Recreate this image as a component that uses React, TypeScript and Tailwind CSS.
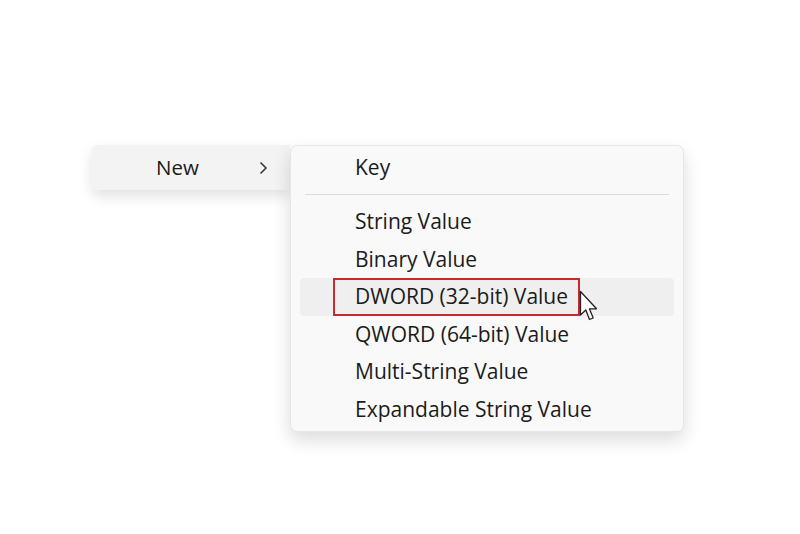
import React from "react";

const items = [
  "String Value",
  "Binary Value",
  "DWORD (32-bit) Value",
  "QWORD (64-bit) Value",
  "Multi-String Value",
  "Expandable String Value",
];

function Cursor() {
  return (
    <svg width="20" height="32" viewBox="0 0 20 32" className="absolute z-20 left-[579px] top-[290px]">
      <path
        d="M1.5 1.5 L1.5 25 L6.8 20 L10.5 29.5 L14.2 28 L10.4 18.8 L17.5 18.8 Z"
        fill="#fff"
        stroke="#222"
        strokeWidth="1.3"
        strokeLinejoin="round"
      />
    </svg>
  );
}

export default function App() {
  return (
    <div
      className="relative w-[800px] h-[534px] bg-white overflow-hidden pt-[145px] pl-[92px] text-[#1b1b1b]"
      style={{ fontFamily: '"Open Sans", "Noto Sans", sans-serif' }}
    >
      <div className="flex items-start">
        <div className="w-[198px] h-[45px] bg-[#f3f3f3] rounded-l-[5px] shadow-[0_6px_14px_rgba(0,0,0,0.12)] flex items-center">
          <span className="ml-[64px] text-[20.5px] leading-none">New</span>
          <svg width="10" height="14" viewBox="0 0 10 14" className="ml-[59px]">
            <path d="M2.5 1.5 L8 7 L2.5 12.5" fill="none" stroke="#333" strokeWidth="1.5" />
          </svg>
        </div>
        <div className="relative z-10 w-[394px] h-[287px] bg-[#f9f9f9] rounded-[7px] border border-[#e6e6e6] shadow-[0_8px_18px_rgba(0,0,0,0.14)] pt-[3px] px-[9px] flex flex-col">
          <div className="h-[38px] flex items-center pl-[55px] text-[21px]">Key</div>
          <div className="pt-[7px] pb-[8px] px-[5px]">
            <div className="h-px bg-[#dcdcdc]" />
          </div>
          {items.map((t) => {
            const hl = t.startsWith("DWORD");
            return (
              <div
                key={t}
                className={`relative h-[37.6px] flex items-center pl-[55px] text-[21px] rounded-[4px] ${hl ? "bg-[#efefef]" : ""}`}
              >
                {hl && (
                  <div className="absolute left-[33px] top-0 w-[247px] h-full border-2 border-[#c8282e]" />
                )}
                <span className="relative">{t}</span>
              </div>
            );
          })}
        </div>
      </div>
      <Cursor />
    </div>
  );
}
